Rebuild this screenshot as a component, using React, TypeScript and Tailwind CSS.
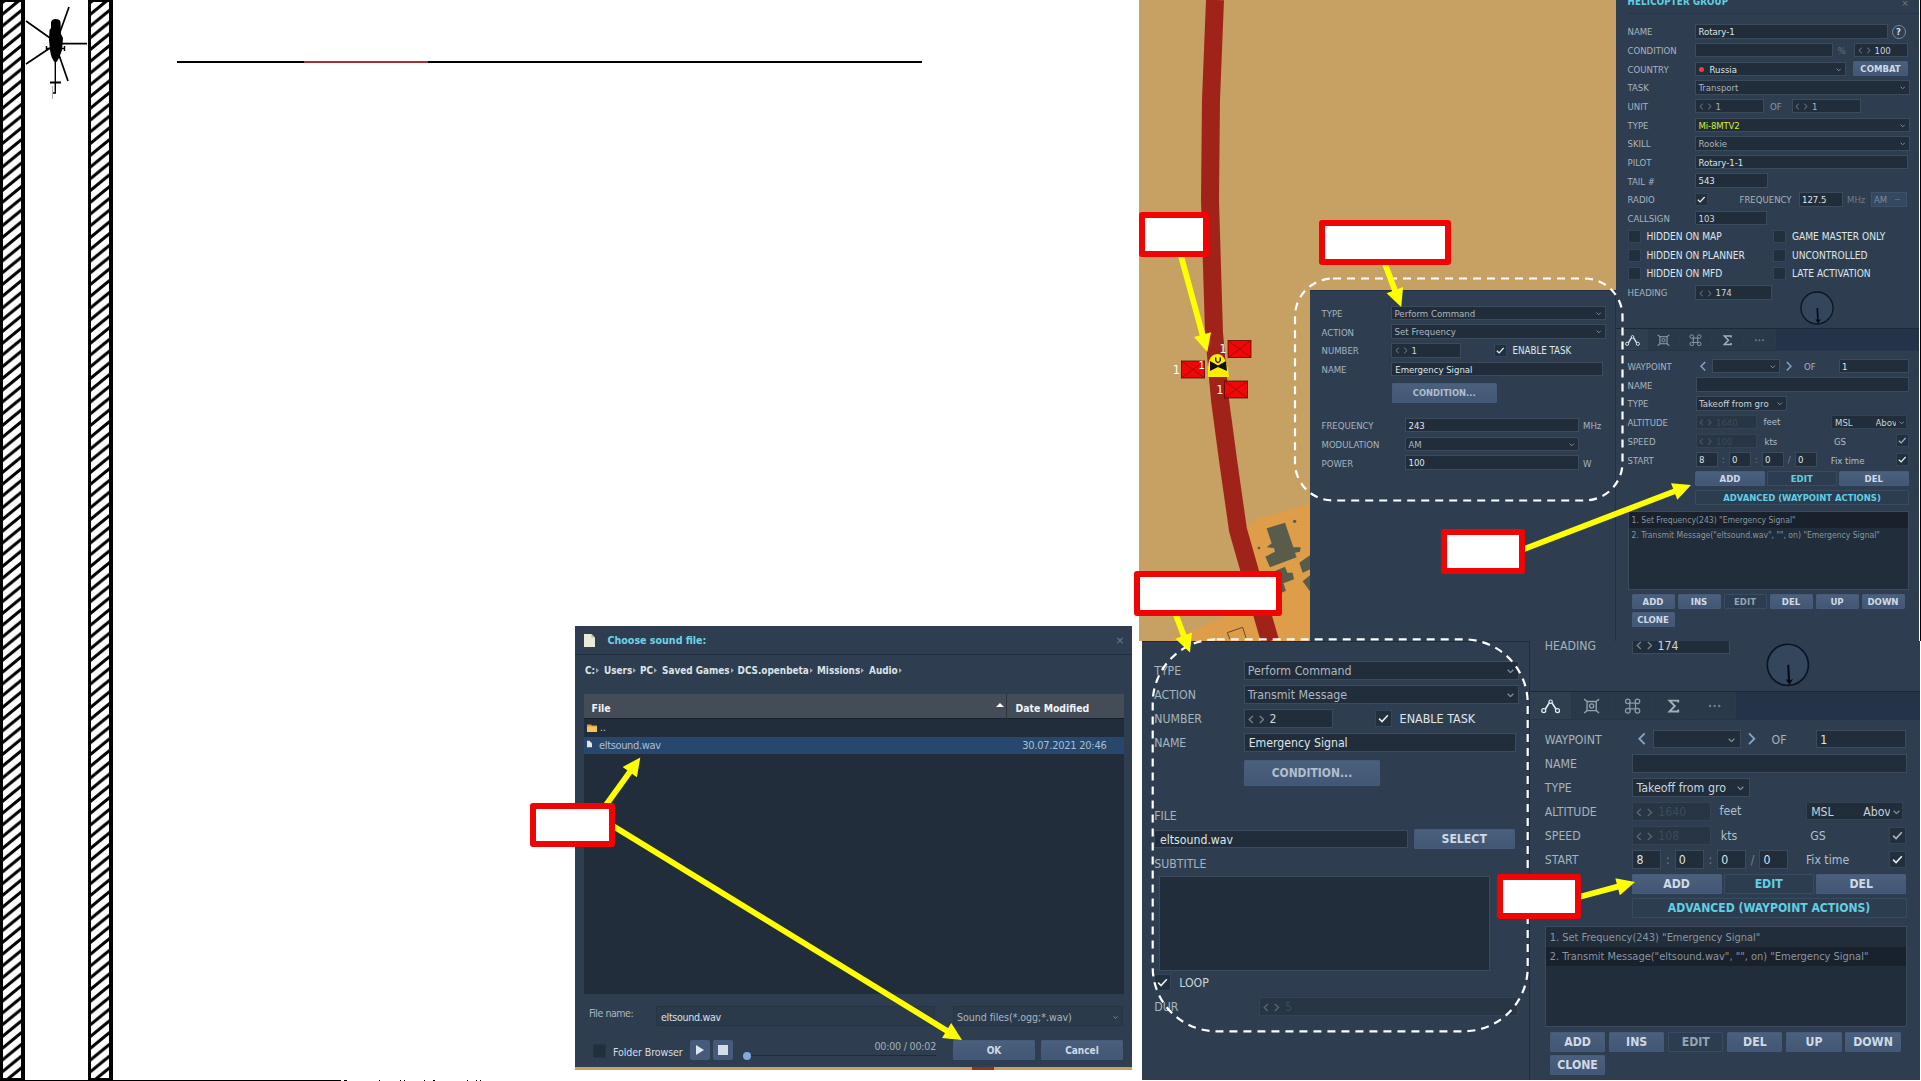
import React from "react";

const cx = (...parts: (string | false | undefined)[]) => parts.filter(Boolean).join(" ");

/* ---------- small controls shared by the mission editor panels ---------- */

function Chevron({ className }: { className?: string }) {
  return (
    <svg viewBox="0 0 8 5" className={cx("h-3.5 w-5.5 shrink-0 fill-none stroke-[#8391a0]", className)}>
      <path d="M0.8 0.8 L4 4 L7.2 0.8" strokeWidth="1.4" />
    </svg>
  );
}

function Check({ on, dim, className }: { on?: boolean; dim?: boolean; className?: string }) {
  return (
    <span className={cx("flex h-13 w-13 shrink-0 items-center justify-center border border-[#33455a] bg-[#222f3d]", className)}>
      {on && (
        <svg viewBox="0 0 10 8" className={cx("h-7 w-8.5 fill-none", dim ? "stroke-[#aab4bf]" : "stroke-[#e6ebf0]")}>
          <path d="M1 4.2 L3.7 6.8 L9 1" strokeWidth="1.5" />
        </svg>
      )}
    </span>
  );
}

function Spin({ dim }: { dim?: boolean }) {
  return (
    <svg viewBox="0 0 13 7" className={cx("mr-4 h-7 w-13 shrink-0 fill-none", dim ? "stroke-[#5a6774]" : "stroke-[#75838f]")}>
      <path d="M3.8 0.8 L0.9 3.5 L3.8 6.2 M9.2 0.8 L12.1 3.5 L9.2 6.2" strokeWidth="1" />
    </svg>
  );
}

type FieldProps = { className?: string; children?: React.ReactNode; select?: boolean; spin?: boolean; dim?: boolean };

function Field({ className, children, select, spin, dim }: FieldProps) {
  return (
    <span
      className={cx(
        "flex h-14.5 shrink-0 items-center overflow-hidden border pt-1 pl-2.5 whitespace-pre",
        dim ? "border-[#334354] bg-[#273544] text-[#3d4b59]" : "border-[#3b4b5c] bg-[#212d3a]",
        className
      )}
    >
      {spin && <Spin dim={dim} />}
      {children}
      {select && <Chevron className="mr-3.5 ml-auto" />}
    </span>
  );
}

function Label({ className, children }: { className?: string; children: React.ReactNode }) {
  return <span className={cx("shrink-0 pt-1.25 whitespace-pre", className)}>{children}</span>;
}

function Button({ className, children, flat, tone }: { className?: string; children: React.ReactNode; flat?: boolean; tone: string }) {
  return (
    <span
      className={cx(
        "flex shrink-0 items-center justify-center rounded-[1px] border pt-0.5 font-bold whitespace-pre",
        flat ? "border-[#384c61] bg-[#2c3d50]" : "border-[#465b77] bg-linear-to-b from-[#4b607c] to-[#415775]",
        tone,
        className
      )}
    >
      {children}
    </span>
  );
}

const bright = "text-[#cfdae6]";
const cyan = "text-[#62cfe2]";

function Row({ className, children }: { className?: string; children: React.ReactNode }) {
  return <div className={cx("flex h-18.75 shrink-0 items-center text-[#a7b3be]", className)}>{children}</div>;
}

/* ---------- group panel ---------- */

function GroupRow({ className, children }: { className?: string; children: React.ReactNode }) {
  return <div className={cx("flex h-[18.65px] shrink-0 items-center text-[#a7b3be]", className)}>{children}</div>;
}

function HeadingBlock() {
  return (
    <div className="flex h-44.75 shrink-0 items-start">
      <Row>
        <Label className="w-67.5">HEADING</Label>
        <Field spin className="w-76.5 text-[#cdd5dc]">174</Field>
      </Row>
      <svg viewBox="0 0 34 34" className="mt-8 ml-28 h-34 w-34 shrink-0">
        <circle cx="17" cy="17" r="16" fill="#34465c" stroke="#0a1524" strokeWidth="1.3" />
        <path d="M17.3 17 L18 31" stroke="#050c16" strokeWidth="1.6" />
        <path d="M15.2 28 L18.3 32.6 L21 28 L18.2 29.2 Z" fill="#050c16" />
      </svg>
    </div>
  );
}

function GroupForm() {
  const value = "text-[#dfe5ea]";
  return (
    <div className="flex h-328 flex-col pl-11.5">
      <div className="flex h-13.5 shrink-0 items-start border-b border-[#263646]">
        <span className="-mt-3.5 w-274 text-[9.6px] font-bold tracking-[0.2px] text-[#62cfe2]">HELICOPTER GROUP</span>
        <span className="-mt-2.5 text-[#6d7c8b]">×</span>
      </div>
      <GroupRow className="mt-8.75">
        <Label className="w-67.5">NAME</Label>
        <Field className={cx("w-192.5", value)}>Rotary-1</Field>
        <span className="ml-4 flex h-14 w-14 items-center justify-center rounded-full border border-[#7d8a97] font-bold text-[#d5dce3]">?</span>
      </GroupRow>
      <GroupRow>
        <Label className="w-67.5">CONDITION</Label>
        <Field className="w-137.5" />
        <Label className="ml-5 w-16.5 text-[#63717f]">%</Label>
        <Field spin className="w-54 text-[#cdd5dc]">100</Field>
      </GroupRow>
      <GroupRow>
        <Label className="w-67.5">COUNTRY</Label>
        <Field select className={cx("w-150.5", value)}>
          <span className="mr-5.5 h-5.5 w-5.5 rounded-full bg-[#f03a48]" />
          Russia
        </Field>
        <Button tone={bright} className="ml-7.5 h-15 w-55">COMBAT</Button>
      </GroupRow>
      <GroupRow>
        <Label className="w-67.5">TASK</Label>
        <Field select className="w-214.5 text-[#a9b4be]">Transport</Field>
      </GroupRow>
      <GroupRow>
        <Label className="w-67.5">UNIT</Label>
        <Field spin className="w-68.5 text-[#a9b4be]">1</Field>
        <Label className="ml-6.5 w-21.5 text-[#8996a3]">OF</Label>
        <Field spin className="w-69 text-[#a9b4be]">1</Field>
      </GroupRow>
      <GroupRow>
        <Label className="w-67.5">TYPE</Label>
        <Field select className="w-214.5 tracking-[-0.15px] text-[#d9e93a]">Mi-8MTV2</Field>
      </GroupRow>
      <GroupRow>
        <Label className="w-67.5">SKILL</Label>
        <Field select className="w-214.5 text-[#a9b4be]">Rookie</Field>
      </GroupRow>
      <GroupRow>
        <Label className="w-67.5">PILOT</Label>
        <Field className={cx("w-212.5", value)}>Rotary-1-1</Field>
      </GroupRow>
      <GroupRow>
        <Label className="w-67.5">TAIL #</Label>
        <Field className={cx("w-72.5", value)}>543</Field>
      </GroupRow>
      <GroupRow>
        <Label className="w-67.5">RADIO</Label>
        <Check on />
        <Label className="ml-31.5 w-59">FREQUENCY</Label>
        <Field className={cx("w-44", value)}>127.5</Field>
        <Label className="ml-4.5 w-23.5 text-[#6d7b88]">MHz</Label>
        <span className="flex h-14.5 w-36 items-center border border-[#3d5168] bg-[#34485e] pt-1 pl-2.5 text-[#7f8d9b]">
          AM
          <span className="ml-8 h-px w-5 bg-[#586a7d]" />
        </span>
      </GroupRow>
      <GroupRow>
        <Label className="w-67.5">CALLSIGN</Label>
        <Field className="w-72 text-[#cdd5dc]">103</Field>
      </GroupRow>
      {[
        ["HIDDEN ON MAP", "GAME MASTER ONLY"],
        ["HIDDEN ON PLANNER", "UNCONTROLLED"],
        ["HIDDEN ON MFD", "LATE ACTIVATION"],
      ].map(([left, right]) => (
        <GroupRow key={left} className="text-[10.1px]">
          <Check />
          <span className="w-132.5 pt-1 pl-6 whitespace-pre text-[#dfe5ea]">{left}</span>
          <Check />
          <span className="pt-1 pl-6 whitespace-pre text-[#dfe5ea]">{right}</span>
        </GroupRow>
      ))}
      <HeadingBlock />
    </div>
  );
}

/* ---------- waypoint panel ---------- */

function Tabs() {
  const cell = "flex h-full w-32 items-center justify-center border-r border-[#2b3b4d] bg-[#293949] pt-1.5";
  const icon = "h-12.5 w-15 fill-none";
  return (
    <div className="flex h-22.75 shrink-0 border-t border-b border-t-[#1c2937] border-b-[#26364a] bg-[#243347]">
      <span className="flex h-full w-32 items-center justify-center bg-[#2f3f50] pt-1.5">
        <svg viewBox="0 0 16 12" className={cx(icon, "stroke-[#e2e8ee]")}>
          <path d="M3.5 8.7 L7 3.2 M9 3.2 L12.5 8.7" strokeWidth="1.4" />
          <circle cx="8" cy="2.4" r="1.4" strokeWidth="1" />
          <circle cx="2.3" cy="9.8" r="1.7" strokeWidth="1" />
          <circle cx="13.7" cy="9.8" r="1.7" strokeWidth="1" />
        </svg>
      </span>
      <span className={cell}>
        <svg viewBox="0 0 16 14" className={cx(icon, "stroke-[#95a1ad]")}>
          <path d="M4 3 H12 V11 H4 Z M1.5 1 L4 3 M14.5 1 L12 3 M1.5 13 L4 11 M14.5 13 L12 11" strokeWidth="1.2" />
          <circle cx="8" cy="7" r="1.8" strokeWidth="1.1" />
        </svg>
      </span>
      <span className={cell}>
        <svg viewBox="0 0 16 14" className={cx(icon, "stroke-[#8d99a5]")}>
          <path d="M5.5 4.5 H10.5 V9.5 H5.5 Z" strokeWidth="1.1" />
          <circle cx="3.8" cy="2.9" r="2" strokeWidth="1.1" />
          <circle cx="12.2" cy="2.9" r="2" strokeWidth="1.1" />
          <circle cx="3.8" cy="11.1" r="2" strokeWidth="1.1" />
          <circle cx="12.2" cy="11.1" r="2" strokeWidth="1.1" />
        </svg>
      </span>
      <span className={cell}>
        <svg viewBox="0 0 16 14" className={cx(icon, "stroke-[#a3aeb9]")}>
          <path d="M12 4 V2.3 H4.5 L9 7 L4.5 11.7 H12 V10" strokeWidth="1.7" />
        </svg>
      </span>
      <span className={cell}>
        <svg viewBox="0 0 16 14" className="h-12.5 w-15 fill-[#6f7d8b]">
          <circle cx="4" cy="7" r="1.1" />
          <circle cx="8" cy="7" r="1.1" />
          <circle cx="12" cy="7" r="1.1" />
        </svg>
      </span>
    </div>
  );
}

function Arrow({ flip }: { flip?: boolean }) {
  return (
    <svg viewBox="0 0 6 10" className={cx("h-10.5 w-6 shrink-0 fill-none stroke-[#86a5c6]", flip && "-scale-x-100")}>
      <path d="M5.2 0.8 L1 5 L5.2 9.2" strokeWidth="1.4" />
    </svg>
  );
}

function WaypointForm({ selected, altitude, speed }: { selected: number; altitude: string; speed: string }) {
  const value = "text-[#dfe5ea]";
  const soft = "text-[#b4bec8]";
  const actions = ['1. Set Frequency(243) "Emergency Signal"', '2. Transmit Message("eltsound.wav", "", on) "Emergency Signal"'];
  return (
    <div className="flex flex-col">
      <Tabs />
      <div className="flex flex-col pt-5.75 pl-11.5">
        <Row>
          <Label className="w-72.5">WAYPOINT</Label>
          <Arrow />
          <Field select className="ml-6 w-68" />
          <span className="ml-5.5 flex">
            <Arrow flip />
          </span>
          <Label className="ml-12.5 w-34.5">OF</Label>
          <Field className={cx("w-70", value)}>1</Field>
        </Row>
        <Row>
          <Label className="w-68">NAME</Label>
          <Field className="w-213.5" />
        </Row>
        <Row>
          <Label className="w-68">TYPE</Label>
          <Field select className="w-91.5 text-[1.01em] text-[#cbd3da]">Takeoff from gro</Field>
        </Row>
        <Row>
          <Label className="w-68">ALTITUDE</Label>
          <Field spin dim className="w-61.5">{altitude}</Field>
          <Label className={cx("ml-6.5 w-67.5 pb-1.5", soft)}>feet</Label>
          <span className="flex h-14 w-75.5 items-center border border-[#33434f] bg-[#212d3a] pt-1 pl-3 text-[#cbd3da]">
            <span className="w-40.5">MSL</span>
            <span className="w-20.5 overflow-hidden whitespace-pre">Abov</span>
            <Chevron className="ml-2.5" />
          </span>
        </Row>
        <Row>
          <Label className="w-68">SPEED</Label>
          <Field spin dim className="w-61.5">{speed}</Field>
          <Label className={cx("ml-7.5 w-69.5", soft)}>kts</Label>
          <Label className={cx("w-61.5", soft)}>GS</Label>
          <Check on dim />
        </Row>
        <Row>
          <Label className="w-68">START</Label>
          {[["8", ":"], ["0", ":"], ["0", "/"], ["0", ""]].map(([n, sep], i) => (
            <React.Fragment key={i}>
              <Field className={cx("w-22.5", value)}> {n}</Field>
              <span className="w-10.5 text-center text-[#73818e]">{sep}</span>
            </React.Fragment>
          ))}
          <Label className={cx("ml-3.25 w-64.75", soft)}>Fix time</Label>
          <Check on />
        </Row>
        <div className="mt-1.5 ml-67.5 flex h-15.75 gap-1.75">
          <Button tone={bright} className="w-70">ADD</Button>
          <Button flat tone={cyan} className="w-70">EDIT</Button>
          <Button tone={bright} className="w-70.5">DEL</Button>
        </div>
        <Button flat tone={cyan} className="mt-3.25 ml-67.5 h-15.5 w-214 text-[0.99em]">ADVANCED (WAYPOINT ACTIONS)</Button>
        <div className="mt-6.25 flex h-78.75 w-281.5 flex-col border border-[#3b4b5c] bg-[#212d3a]">
          {actions.map((text, i) => (
            <div key={text} className={cx("flex h-15.25 items-center pt-0.75 pl-3 text-[0.9em] whitespace-pre text-[#8995a1]", i === selected && "bg-[#18212c]")}>
              {text}
            </div>
          ))}
        </div>
        <div className="mt-4 ml-4 flex w-276 flex-wrap gap-x-3 gap-y-2.5">
          {["ADD", "INS", "EDIT", "DEL", "UP", "DOWN", "CLONE"].map((name) => (
            <Button key={name} flat={name === "EDIT"} tone={name === "EDIT" ? "text-[#93a3b3]" : bright} className="h-15.25 w-43">{name}</Button>
          ))}
        </div>
      </div>
    </div>
  );
}

/* ---------- task panels ---------- */

function TaskHead({ action, number }: { action: string; number: string }) {
  return (
    <>
      <Row>
        <Label className="w-69.5">TYPE</Label>
        <Field select className="w-214.5 text-[1.01em] text-[#adb7c1]">Perform Command</Field>
      </Row>
      <Row>
        <Label className="w-69.5">ACTION</Label>
        <Field select className="w-214.5 text-[1.01em] text-[#adb7c1]">{action}</Field>
      </Row>
      <Row>
        <Label className="w-69.5">NUMBER</Label>
        <Field spin className="w-69.5 text-[#cdd5dc]">{number}</Field>
        <Check on className="ml-33" />
        <span className="ml-6 pt-1 text-[1.02em] whitespace-pre text-[#dfe5ea]">ENABLE TASK</span>
      </Row>
      <Row>
        <Label className="w-69.5">NAME</Label>
        <Field className="w-212 pl-3.25 text-[#dfe5ea]">Emergency Signal</Field>
      </Row>
      <Button tone="text-[#b0bfce]" className="mt-4.25 ml-70 h-20.25 w-105.5">
        <span className="text-[0.98em]">CONDITION...</span>
      </Button>
    </>
  );
}

function FrequencyTask() {
  return (
    <section className="mt-290 ml-171 flex h-351 w-306 flex-col border-t border-r border-[#22303f] bg-[#2e3e50] pt-12.5 pl-11.5">
      <TaskHead action="Set Frequency" number="1" />
      <Row className="mt-12.75">
        <Label className="w-83.5">FREQUENCY</Label>
        <Field className="w-174 text-[#dfe5ea]">243</Field>
        <Label className="ml-4">MHz</Label>
      </Row>
      <Row>
        <Label className="w-83.5">MODULATION</Label>
        <Field select className="w-174 text-[#a9b4be]">AM</Field>
      </Row>
      <Row>
        <Label className="w-83.5">POWER</Label>
        <Field className="w-174 text-[#dfe5ea]">100</Field>
        <Label className="ml-4">W</Label>
      </Row>
    </section>
  );
}

function MessageTask() {
  return (
    <section className="flex w-302 shrink-0 flex-col border-t border-r border-[#1f2c3a] bg-[#2e3e50] pt-12.75 pl-9.5">
      <TaskHead action="Transmit Message" number="2" />
      <Row className="mt-13">
        <Label>FILE</Label>
      </Row>
      <Row>
        <Field className="w-197.5 pl-3.75 text-[#dfe5ea]">eltsound.wav</Field>
        <Button tone={bright} className="ml-4.5 h-16 w-78.5">SELECT</Button>
      </Row>
      <Row>
        <Label>SUBTITLE</Label>
      </Row>
      <span className="mt-1 ml-4 block h-73.5 w-257.5 border border-[#3b4b5c] bg-[#212d3a]" />
      <Row className="-mt-0.5">
        <Check on />
        <span className="ml-6.5 pt-1 text-[#cdd5dc]">LOOP</span>
      </Row>
      <Row>
        <Label className="w-81.5">DUR</Label>
        <Field spin dim className="w-201.5">5</Field>
      </Row>
    </section>
  );
}

/* ---------- map ---------- */

function Unit({ x, y, tx }: { x: number; y: number; tx: number }) {
  return (
    <g>
      <rect x={x} y={y} width="23" height="17" fill="#f00808" stroke="#5a0a06" strokeWidth="0.8" />
      <path d={`M${x} ${y} l23 17 M${x + 23} ${y} l-23 17`} stroke="#8d0d08" strokeWidth="0.8" />
      <text x={tx} y={y + 12.5} fontSize="12" fill="#fff">1</text>
    </g>
  );
}

function MapView() {
  return (
    <svg viewBox="0 0 477 641" className="absolute top-0 left-0 h-[641px] w-[477px]">
      <rect width="477" height="641" fill="#c7a163" />
      <path d="M171 504 L120 518 L108 526 L112 570 L90 615 L28 641 H171 Z" fill="#dd9d49" />
      <path d="M76 0 L72 100 L71 200 L75 333 L81 400 L89 460 L99 530 L111 572 L131 641" fill="none" stroke="#a02319" strokeWidth="18" strokeLinejoin="round" />
      <g transform="translate(-19 460) scale(.3333)" fill="#595b4b">
        <path d="M440 205 L495 188 L520 262 L542 262 L540 275 L525 278 L530 292 L450 322 L436 290 L465 275 L462 264 L440 262 L455 250 Z" />
        <path d="M465 333 L495 320 L502 338 L518 338 L522 358 L490 370 L498 392 L485 398 L470 350 Z" />
        <path d="M571 285 L538 308 L548 338 L571 328 Z M571 345 L548 364 L571 395 Z" />
        <circle cx="524" cy="184" r="5" />
        <circle cx="417" cy="264" r="4" />
        <path d="M322 518 L368 502 L380 540 M322 518 L330 538" fill="none" stroke="#5f4b2b" strokeWidth="3" />
      </g>
      <g fontFamily="DejaVu Sans">
        <Unit x={89} y={340.5} tx={80.5} />
        <Unit x={42.5} y={361} tx={34} />
        <Unit x={85.5} y={381} tx={77.5} />
        <text x="59.5" y="369" fontSize="11" fill="#fff">1</text>
      </g>
      <path d="M69 377 V369 Q69 354 79 354 Q88 355 90 377 Z" fill="#ffee00" />
      <path d="M71 361 L79 365.5 L87 361 L88 371 L79 367 L71 371 Z" fill="#111" />
      <path d="M76.7 357.5 V360.5 Q79 364.5 81.3 360.5 V357.5" fill="none" stroke="#222" strokeWidth="1.4" />
    </svg>
  );
}

/* ---------- sound file dialog ---------- */

function SoundDialog() {
  const crumbs: [string, string][] = [
    ["C:", "w-[19px]"],
    ["Users", "w-[36px]"],
    ["PC", "w-[22px]"],
    ["Saved Games", "w-[75.5px]"],
    ["DCS.openbeta", "w-[79.5px]"],
    ["Missions", "w-[52px]"],
    ["Audio", "w-[40px]"],
  ];
  return (
    <section className="ml-[462px] flex w-[557px] flex-col text-[10.6px] leading-none">
      <div className="flex h-[441px] flex-col bg-[#2e3e50] px-[8.5px]">
        <header className="-mx-[8.5px] flex h-[28.5px] shrink-0 items-center border-b border-[#22303e] pt-[1px] pl-[9px]">
          <svg viewBox="0 0 11 13" className="h-[13px] w-[11px]">
            <path d="M0 0 H7.5 L11 3.5 V13 H0 Z" fill="#e9ead8" />
            <path d="M7.5 0 V3.5 H11 Z" fill="#b9bba6" />
          </svg>
          <span className="ml-[12.5px] pt-[1px] text-[10.6px] font-bold text-[#6fd3e6]">Choose sound file:</span>
          <svg viewBox="0 0 8 8" className="mr-[8px] ml-auto h-[7px] w-[8px] stroke-[#64798e]">
            <path d="M1 1 L7 7 M7 1 L1 7" strokeWidth="1.2" />
          </svg>
        </header>
        <nav className="flex h-[32px] shrink-0 items-center pl-[1.5px] text-[9.9px] font-bold text-[#dde3e9]">
          {crumbs.map(([name, width]) => (
            <span key={name} className={cx("flex shrink-0 items-center whitespace-pre", width)}>
              {name}
              <svg viewBox="0 0 3 5" className="ml-[1px] h-[5px] w-[3px] fill-[#9aa7b4]">
                <path d="M0 0 L3 2.5 L0 5 Z" />
              </svg>
            </span>
          ))}
        </nav>
        <div className="mt-[7.5px] flex h-[299.5px] shrink-0 flex-col bg-[#212d3a]">
          <div className="flex h-[25px] shrink-0 items-center border-b border-[#18222c] bg-[#434c57] pt-[4px] text-[10.4px] font-bold text-[#f1f4f6]">
            <span className="w-[412.5px] pl-[8px]">File</span>
            <svg viewBox="0 0 8 4" className="-mt-[7px] h-[4px] w-[8px] fill-white">
              <path d="M0 4 L4 0 L8 4 Z" />
            </svg>
            <span className="-mt-[4px] ml-[2px] h-[25px] w-px bg-[#2b343e]" />
            <span className="ml-[8.5px]">Date Modified</span>
          </div>
          <div className="flex h-[17.5px] shrink-0 items-center pl-[3.5px] text-[#c0c8d0]">
            <svg viewBox="0 0 10 8" className="h-[8px] w-[10px]">
              <path d="M0 0.5 H4 L5 1.5 H10 V8 H0 Z" fill="#d79b2e" />
              <path d="M0 2.5 H10 V8 H0 Z" fill="#f5c35c" />
            </svg>
            <span className="ml-[3px]">..</span>
          </div>
          <div className="flex h-[17.5px] shrink-0 items-center bg-[#28476c] pl-[3.5px] text-[11px] text-[#a9bfd6]">
            <svg viewBox="0 0 6 8" className="-mt-[2px] h-[8px] w-[5px] fill-[#e3e6e2]">
              <path d="M0 0 H3 L6 3 V8 H0 Z" />
            </svg>
            <span className="ml-[7px] tracking-[-0.35px]">eltsound.wav</span>
            <span className="mr-[17px] ml-auto tracking-[-0.25px]">30.07.2021 20:46</span>
          </div>
        </div>
        <div className="mt-[12px] flex h-[20px] shrink-0 items-center text-[#aab5c0]">
          <span className="w-[72.5px] pb-[4px] pl-[5.5px] tracking-[-0.5px]">File name:</span>
          <span className="flex h-[20px] w-[279px] items-center border border-[#263443] bg-[#2a3a4b] pt-[3px] pl-[4px] tracking-[-0.3px] text-[#dbe1e7]">eltsound.wav</span>
          <span className="ml-[18px] flex h-[20px] w-[170px] items-center border border-[#263443] bg-[#2a3a4b] pt-[3px] pl-[3px] tracking-[-0.05px]">
            Sound files(*.ogg;*.wav)
            <svg viewBox="0 0 8 5" className="mr-[4px] ml-auto h-[3px] w-[5px] fill-none stroke-[#8b98a5]">
              <path d="M0.8 0.8 L4 4 L7.2 0.8" strokeWidth="1.4" />
            </svg>
          </span>
        </div>
        <div className="mt-[13.5px] flex h-[21px] shrink-0 items-center">
          <span className="mt-[2px] ml-[9.5px] h-[14px] w-[13px] border border-[#263443] bg-[#222f3d]" />
          <span className="ml-[7px] w-[77px] pt-[6px] whitespace-pre tracking-[-0.1px] text-[#d5dce3]">Folder Browser</span>
          <span className="flex h-[20px] w-[20px] items-center justify-center rounded-[2px] bg-[#465b79]">
            <svg viewBox="0 0 8 10" className="h-[10px] w-[8px] fill-[#dbe6f1]">
              <path d="M0 0 L8 5 L0 10 Z" />
            </svg>
          </span>
          <span className="ml-[3px] flex h-[20px] w-[20px] items-center justify-center rounded-[2px] bg-[#465b79]">
            <span className="h-[10px] w-[10px] bg-[#d3deea]" />
          </span>
          <div className="ml-[9.5px] flex w-[193.5px] flex-col pt-[2px]">
            <span className="self-end tracking-[-0.2px] text-[#a3afba]">00:00 / 00:02</span>
            <div className="flex items-center">
              <span className="h-[8px] w-[8px] rounded-full bg-[#7fa9df]" />
              <span className="h-px flex-1 bg-[#1f2b38]" />
            </div>
          </div>
          <Button tone={bright} className="mt-[1px] ml-[17px] h-[20.5px] w-[82px] text-[10px]">OK</Button>
          <Button tone={bright} className="mt-[1px] ml-[6px] h-[20.5px] w-[82px] text-[10px]">Cancel</Button>
        </div>
      </div>
      <div className="flex h-[2.5px] bg-[#c7a163] pl-[397px]">
        <span className="w-[22px] bg-[#8f3322]" />
      </div>
    </section>
  );
}

/* ---------- slide furniture ---------- */

function Rail() {
  return (
    <div className="h-[1081px] w-[25px] shrink-0 border-t-2 border-r-4 border-b-3 border-l-3 border-black">
      <svg className="h-full w-full">
        <defs>
          <pattern id="hatch" width="18" height="11.75" patternUnits="userSpaceOnUse">
            <path
              d="M-2 1.6 L20 -16.4 M-2 13.35 L20 -4.65 M-2 25.1 L20 7.1 M-2 36.85 L20 18.85"
              stroke="#000"
              strokeWidth="3.1"
            />
          </pattern>
        </defs>
        <rect width="100%" height="100%" fill="url(#hatch)" />
      </svg>
    </div>
  );
}

function Helicopter() {
  return (
    <svg viewBox="25 0 63 110" className="h-[110px] w-[63px] shrink-0">
      <g stroke="#000" strokeWidth="1.7" fill="none">
        <path d="M69 7 L60 32 M26 21 L50 38 M26 64 L50 48 M60 43.7 H87 M59 55 L68 81" />
        <path d="M50 82.5 H61" strokeWidth="2" />
        <path d="M55.3 58 V93 H53 M46 48.5 H65 M46.5 46 V51 M64.5 46 V51" strokeWidth="1.4" />
        <path d="M52.5 86 V99" stroke="#999" strokeWidth="0.8" />
      </g>
      <path d="M51 22 Q52 19 55.5 19 Q60 19 60.5 22 L61 34 L63 38 L62 50 Q59 59 56.5 62 H54.5 Q51 58 50 50 L49 40 L49.5 30 L51 28 Z" />
    </svg>
  );
}

const callouts = [
  "left-[1139px] top-[212px] w-[70px] h-[45px]",
  "left-[1319px] top-[220px] w-[132px] h-[45px]",
  "left-[1441px] top-[529px] w-[84px] h-[45px]",
  "left-[1134px] top-[571px] w-[148px] h-[45px]",
  "left-[1497px] top-[874px] w-[84px] h-[45px]",
  "left-[530px] top-[803px] w-[85px] h-[44px]",
];

const arrows: [number, number, number, number][] = [
  [1181, 256, 1207.3, 352],
  [1385, 264, 1401.2, 307],
  [1524, 549, 1691, 485],
  [1176, 615, 1190, 652.5],
  [1579, 897, 1635, 882],
  [606, 805, 640.3, 757.5],
  [613, 826, 962, 1040],
];

function Annotations() {
  return (
    <>
      <svg viewBox="0 0 1921 1081" className="absolute top-0 left-0 h-[1081px] w-[1921px]">
        <g fill="none" stroke="#fff" strokeWidth="2.2" strokeDasharray="8 6">
          <rect x="1295" y="278.5" width="327.5" height="222" rx="38" />
          <rect x="1152.7" y="639.3" width="375" height="392" rx="64" />
        </g>
        {arrows.map(([x1, y1, x2, y2]) => {
          const len = Math.hypot(x2 - x1, y2 - y1);
          const angle = (Math.atan2(y2 - y1, x2 - x1) * 180) / Math.PI;
          return (
            <g key={x1} transform={`translate(${x1} ${y1}) rotate(${angle})`} fill="#ffff00">
              <rect x="0" y="-2.9" width={len - 15} height="5.8" />
              <path d={`M${len} 0 l-18 -8.8 v17.6 Z`} />
            </g>
          );
        })}
      </svg>
      {callouts.map((place) => (
        <div key={place} className={cx("absolute rounded-[3px] border-[6px] border-[#f00505] bg-white", place)} />
      ))}
    </>
  );
}

export default function App() {
  return (
    <main className="relative flex h-[1081px] w-[1921px] overflow-hidden bg-white font-['DejaVu_Sans_Condensed','DejaVu_Sans',sans-serif] [font-stretch:condensed]">
      <Rail />
      <Helicopter />
      <Rail />

      <div className="flex w-[1026px] shrink-0 flex-col">
        <div className="mt-[61px] mb-[563px] ml-[64px] flex h-[2px] w-[745px] shrink-0 bg-black pl-[127px]">
          <span className="w-[124px] bg-[#a3303a]" />
        </div>
        <SoundDialog />
      </div>

      <div className="flex w-[782px] shrink-0 flex-col">
        <div className="flex h-[641px] shrink-0 overflow-hidden text-[9.5px] leading-none [--spacing:1px]">
          <div className="relative flex w-477 shrink-0">
            <MapView />
            <div className="relative">
              <FrequencyTask />
            </div>
          </div>
          <div className="w-303 shrink-0 bg-[#2e3e50]">
            <GroupForm />
            <WaypointForm selected={0} altitude="1640" speed="100" />
          </div>
          <div className="ml-px h-full w-px bg-black" />
        </div>
        <div className="ml-[3px] flex h-[439px] shrink-0 overflow-hidden text-[12.2px] leading-none [--spacing:1.285px]">
          <MessageTask />
          <div className="w-[390px] shrink-0 bg-[#2e3e50]">
            <div className="flex h-[49.5px] flex-col justify-end overflow-hidden pl-11.5">
              <HeadingBlock />
            </div>
            <WaypointForm selected={1} altitude="1640" speed="108" />
          </div>
        </div>
      </div>

      <svg viewBox="0 0 500 1" className="absolute bottom-0 left-0 h-px w-[500px]">
        <path d="M0 0 H341 V1 H0 Z M344 0 h3 v1 h-3 Z M379 0 h1 v1 h-1 Z M400 0 h1 v1 h-1 Z M404 0 h1 v1 h-1 Z M424 0 h1 v1 h-1 Z M433 0 h2 v1 h-2 Z M467 0 h1 v1 h-1 Z M476 0 h1 v1 h-1 Z M480 0 h1 v1 h-1 Z" />
      </svg>
      <Annotations />
    </main>
  );
}
